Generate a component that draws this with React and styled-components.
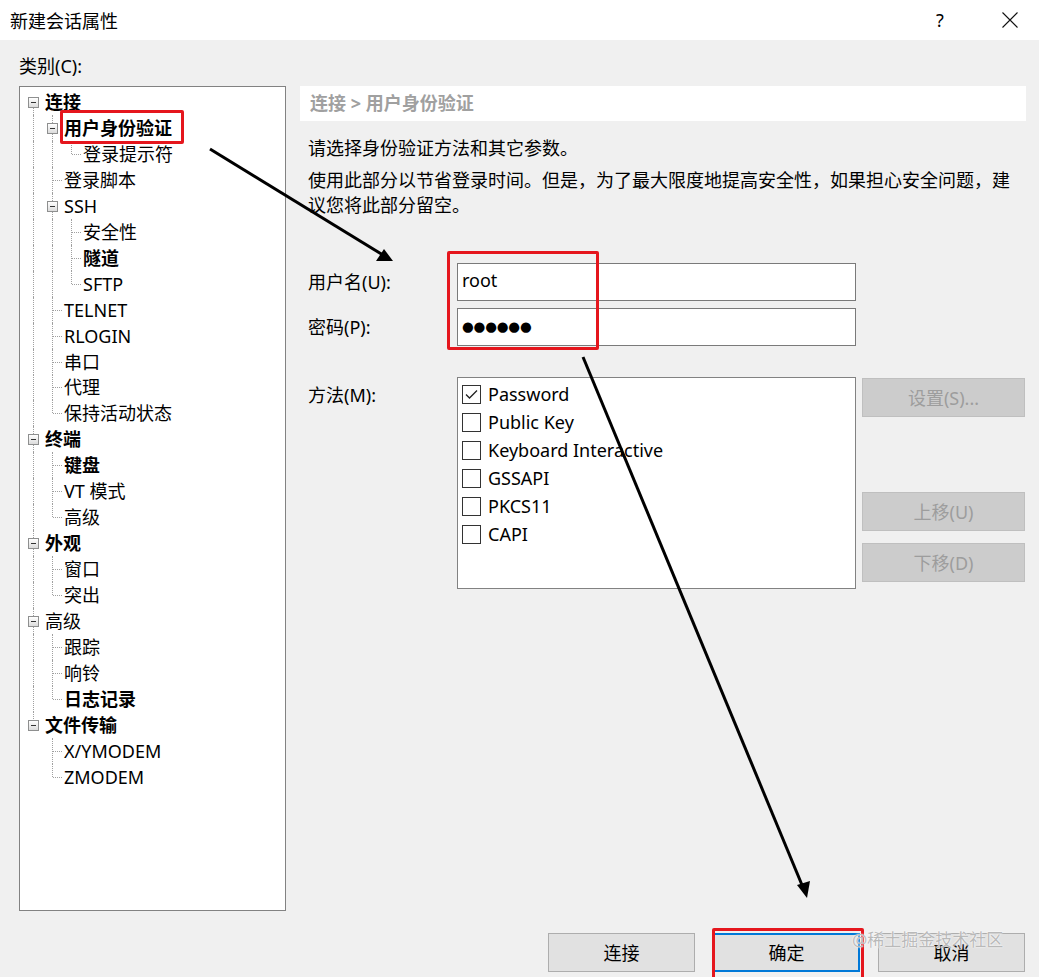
import React from "react";
import styled, { createGlobalStyle } from "styled-components";

const GlobalStyle = createGlobalStyle`
  html, body { margin: 0; padding: 0; background: #f0f0f0; }
  body { font-family: "Noto Sans", "Noto Sans CJK SC", sans-serif; color: #000; }
  * { box-sizing: border-box; }
`;

const Window = styled.div`
  position: relative;
  width: 1039px;
  height: 977px;
  overflow: hidden;
  background: #f0f0f0;
  font-size: 18px;
`;

const TitleBar = styled.div`
  height: 40px;
  background: #fff;
  display: flex;
  align-items: center;
  padding-left: 10px;
`;

const TitleText = styled.div`
  flex: 1;
  font-size: 18px;
  line-height: 26px;
  font-family: "Noto Sans CJK SC", sans-serif;
`;

const TitleControls = styled.div`
  display: flex;
  align-items: center;
  height: 100%;
`;

const HelpGlyph = styled.span`
  width: 60px;
  text-align: center;
  font-family: "Noto Sans", sans-serif;
  font-size: 18px;
  line-height: 26px;
`;

const CloseBox = styled.span`
  width: 69px;
  padding-left: 11px;
  display: flex;
  justify-content: center;
  align-items: center;
`;

const Body = styled.div`
  display: grid;
  grid-template-columns: 267px 726px;
  grid-template-rows: 33px 825px;
  column-gap: 14px;
  padding: 13px 0 0 19px;
`;

const CategoryLabel = styled.div`
  grid-row: 1;
  grid-column: 1;
  line-height: 26px;
  height: 26px;
`;

const TreeBox = styled.div`
  grid-row: 2;
  grid-column: 1;
  background: #fff;
  border: 1px solid #828282;
  padding: 2px 0 0 4px;
  overflow: hidden;
`;

const TreeRow = styled.div`
  display: flex;
  align-items: center;
  height: 25.96px;
`;

const GuideCell = styled.span`
  position: relative;
  flex: 0 0 19px;
  height: 26px;
  &::before {
    content: "";
    position: absolute;
    left: 9px;
    width: 0;
    border-left: 1px dotted #a0a0a0;
    top: ${(p) => (p.$v === "bottom" ? "13px" : "0")};
    bottom: ${(p) => (p.$v === "top" ? "13px" : "0")};
    display: ${(p) => (p.$v === "none" ? "none" : "block")};
  }
  &::after {
    content: "";
    position: absolute;
    left: 10px;
    width: 9px;
    top: 13px;
    height: 0;
    border-top: 1px dotted #a0a0a0;
    display: ${(p) => (p.$h ? "block" : "none")};
  }
`;

const ExpandBox = styled.span`
  position: absolute;
  z-index: 1;
  left: 4px;
  top: 8px;
  width: 11px;
  height: 11px;
  border: 1px solid #8e8f8f;
  background: linear-gradient(#ffffff, #dcdcdc);
  &::after {
    content: "";
    position: absolute;
    left: 2px;
    top: 4px;
    width: 5px;
    height: 1px;
    background: #333;
  }
`;

const TreeLabel = styled.span`
  margin-left: 2px;
  white-space: nowrap;
  line-height: 26px;
  font-weight: ${(p) => (p.$bold ? 700 : 400)};
`;

const RightPanel = styled.div`
  grid-row: 2;
  grid-column: 2;
  display: flex;
  flex-direction: column;
`;

const Breadcrumb = styled.div`
  height: 35px;
  background: #fff;
  padding-left: 10px;
  line-height: 35px;
  font-weight: 700;
  color: #a0a0a0;
`;

const Intro = styled.p`
  margin: 14px 0 0 8px;
  line-height: 26px;
`;

const Note = styled.p`
  margin: 7px 0 0 8px;
  width: 712px;
  line-height: 25px;
`;

const Fields = styled.div`
  margin: 45px 0 0 8px;
  display: grid;
  grid-template-columns: 149px 399px;
  grid-auto-rows: 38px;
  row-gap: 7px;
  align-items: center;
`;

const FieldLabel = styled.label`
  line-height: 26px;
`;

const TextBox = styled.div`
  height: 38px;
  background: #fff;
  border: 1px solid #7a7a7a;
  padding: 0 0 5px 4px;
  display: flex;
  align-items: center;
  line-height: 26px;
`;

const Dots = styled.span`
  font-family: "DejaVu Sans", sans-serif;
  font-size: 13.5px;
  letter-spacing: -0.2px;
  line-height: 26px;
  padding-top: 3px;
`;

const MethodRow = styled.div`
  margin: 31px 0 0 8px;
  display: flex;
  align-items: flex-start;
`;

const MethodLabel = styled.div`
  width: 149px;
  line-height: 26px;
  padding-top: 5px;
`;

const ListBox = styled.div`
  width: 399px;
  height: 212px;
  background: #fff;
  border: 1px solid #828282;
  padding: 2px 0 0 4px;
`;

const CheckRow = styled.div`
  display: flex;
  align-items: center;
  height: 28px;
`;

const CheckBox = styled.span`
  width: 19px;
  height: 19px;
  border: 1px solid #333;
  display: flex;
  align-items: center;
  justify-content: center;
  margin-right: 7px;
`;

const CheckText = styled.span`
  line-height: 26px;
`;

const SideButtons = styled.div`
  margin-left: 6px;
  width: 163px;
  display: flex;
  flex-direction: column;
`;

const DisabledButton = styled.div`
  height: 39px;
  margin-top: ${(p) => p.$top}px;
  background: #cccccc;
  border: 1px solid #bfbfbf;
  color: #9d9d9d;
  display: flex;
  align-items: center;
  justify-content: center;
  line-height: 26px;
`;

const Footer = styled.div`
  display: flex;
  justify-content: flex-end;
  gap: 18px;
  margin-top: 22px;
  padding-right: 14px;
`;

const PushButton = styled.div`
  width: 147px;
  height: 39px;
  background: #e1e1e1;
  border: ${(p) => (p.$default ? "2px solid #0078d7" : "1px solid #adadad")};
  display: flex;
  align-items: center;
  justify-content: center;
  line-height: 26px;
`;

const Highlight = styled.div`
  position: absolute;
  border: 3px solid #e5161d;
  border-radius: 2px;
  pointer-events: none;
`;

const ArrowLayer = styled.svg`
  position: absolute;
  left: 0;
  top: 0;
  pointer-events: none;
`;

const Watermark = styled.div`
  position: absolute;
  left: 852px;
  top: 927px;
  font-size: 17px;
  line-height: 26px;
  color: #b9b9b9;
  text-shadow: 0 0 1px #fff, 0 0 2px #fff;
  font-family: "Noto Sans", "Noto Sans CJK SC", sans-serif;
  pointer-events: none;
`;

const tree = [
  {
    label: "连接", bold: true, children: [
      { label: "用户身份验证", bold: true, children: [{ label: "登录提示符" }] },
      { label: "登录脚本" },
      { label: "SSH", children: [{ label: "安全性" }, { label: "隧道", bold: true }, { label: "SFTP" }] },
      { label: "TELNET" },
      { label: "RLOGIN" },
      { label: "串口" },
      { label: "代理" },
      { label: "保持活动状态" },
    ],
  },
  { label: "终端", bold: true, children: [{ label: "键盘", bold: true }, { label: "VT 模式" }, { label: "高级" }] },
  { label: "外观", bold: true, children: [{ label: "窗口" }, { label: "突出" }] },
  { label: "高级", children: [{ label: "跟踪" }, { label: "响铃" }, { label: "日志记录", bold: true }] },
  { label: "文件传输", bold: true, children: [{ label: "X/YMODEM" }, { label: "ZMODEM" }] },
];

function flatten(nodes, depth, ancestors, out) {
  nodes.forEach((n, i) => {
    const hasNext = i < nodes.length - 1;
    const isFirstRoot = depth === 0 && i === 0;
    const guides = ancestors.map((a) => ({ v: a ? "full" : "none", h: false }));
    let v = hasNext ? "full" : "top";
    if (isFirstRoot) v = hasNext ? "bottom" : "none";
    guides.push({ v, h: true, box: !!n.children });
    out.push({ label: n.label, bold: n.bold, guides });
    if (n.children) flatten(n.children, depth + 1, [...ancestors, hasNext], out);
  });
  return out;
}

const rows = flatten(tree, 0, [], []);

const methods = [
  { label: "Password", checked: true },
  { label: "Public Key" },
  { label: "Keyboard Interactive" },
  { label: "GSSAPI" },
  { label: "PKCS11" },
  { label: "CAPI" },
];

export default function App() {
  return (
    <>
      <GlobalStyle />
      <Window>
        <TitleBar>
          <TitleText>新建会话属性</TitleText>
          <TitleControls>
            <HelpGlyph>?</HelpGlyph>
            <CloseBox>
              <svg width="16" height="16" viewBox="0 0 16 16">
                <path d="M0.5 0.5 L15.5 15.5 M15.5 0.5 L0.5 15.5" stroke="#111" strokeWidth="1.1" fill="none" />
              </svg>
            </CloseBox>
          </TitleControls>
        </TitleBar>

        <Body>
          <CategoryLabel>类别(C):</CategoryLabel>
          <TreeBox>
            {rows.map((r, idx) => (
              <TreeRow key={idx}>
                {r.guides.map((g, gi) => (
                  <GuideCell key={gi} $v={g.v} $h={g.h && !g.box}>
                    {g.box && <ExpandBox />}
                  </GuideCell>
                ))}
                <TreeLabel $bold={r.bold}>{r.label}</TreeLabel>
              </TreeRow>
            ))}
          </TreeBox>

          <RightPanel>
            <Breadcrumb>连接 &gt; 用户身份验证</Breadcrumb>
            <Intro>请选择身份验证方法和其它参数。</Intro>
            <Note>使用此部分以节省登录时间。但是，为了最大限度地提高安全性，如果担心安全问题，建议您将此部分留空。</Note>
            <Fields>
              <FieldLabel>用户名(U):</FieldLabel>
              <TextBox>root</TextBox>
              <FieldLabel>密码(P):</FieldLabel>
              <TextBox>
                <Dots>●●●●●●</Dots>
              </TextBox>
            </Fields>
            <MethodRow>
              <MethodLabel>方法(M):</MethodLabel>
              <ListBox>
                {methods.map((m) => (
                  <CheckRow key={m.label}>
                    <CheckBox>
                      {m.checked && (
                        <svg width="13" height="11" viewBox="0 0 13 11">
                          <polyline points="1,5.5 4.5,9 12,1.5" fill="none" stroke="#222" strokeWidth="1.3" />
                        </svg>
                      )}
                    </CheckBox>
                    <CheckText>{m.label}</CheckText>
                  </CheckRow>
                ))}
              </ListBox>
              <SideButtons>
                <DisabledButton $top={1}>设置(S)...</DisabledButton>
                <DisabledButton $top={75}>上移(U)</DisabledButton>
                <DisabledButton $top={12}>下移(D)</DisabledButton>
              </SideButtons>
            </MethodRow>
          </RightPanel>
        </Body>

        <Footer>
          <PushButton>连接</PushButton>
          <PushButton $default>确定</PushButton>
          <PushButton>取消</PushButton>
        </Footer>

        <Highlight style={{ left: 60, top: 110, width: 124, height: 34 }} />
        <Highlight style={{ left: 447, top: 251, width: 152, height: 99 }} />
        <Highlight style={{ left: 712, top: 928, width: 152, height: 52 }} />

        <ArrowLayer width="1039" height="977" viewBox="0 0 1039 977">
          <line x1="210" y1="149" x2="383" y2="255" stroke="#000" strokeWidth="3" />
          <polygon points="393,261 376,261 384,249" fill="#000" />
          <line x1="583" y1="357" x2="802" y2="885" stroke="#000" strokeWidth="3" />
          <polygon points="807,898 797,885 810,881" fill="#000" />
        </ArrowLayer>

        <Watermark>@稀土掘金技术社区</Watermark>
      </Window>
    </>
  );
}
